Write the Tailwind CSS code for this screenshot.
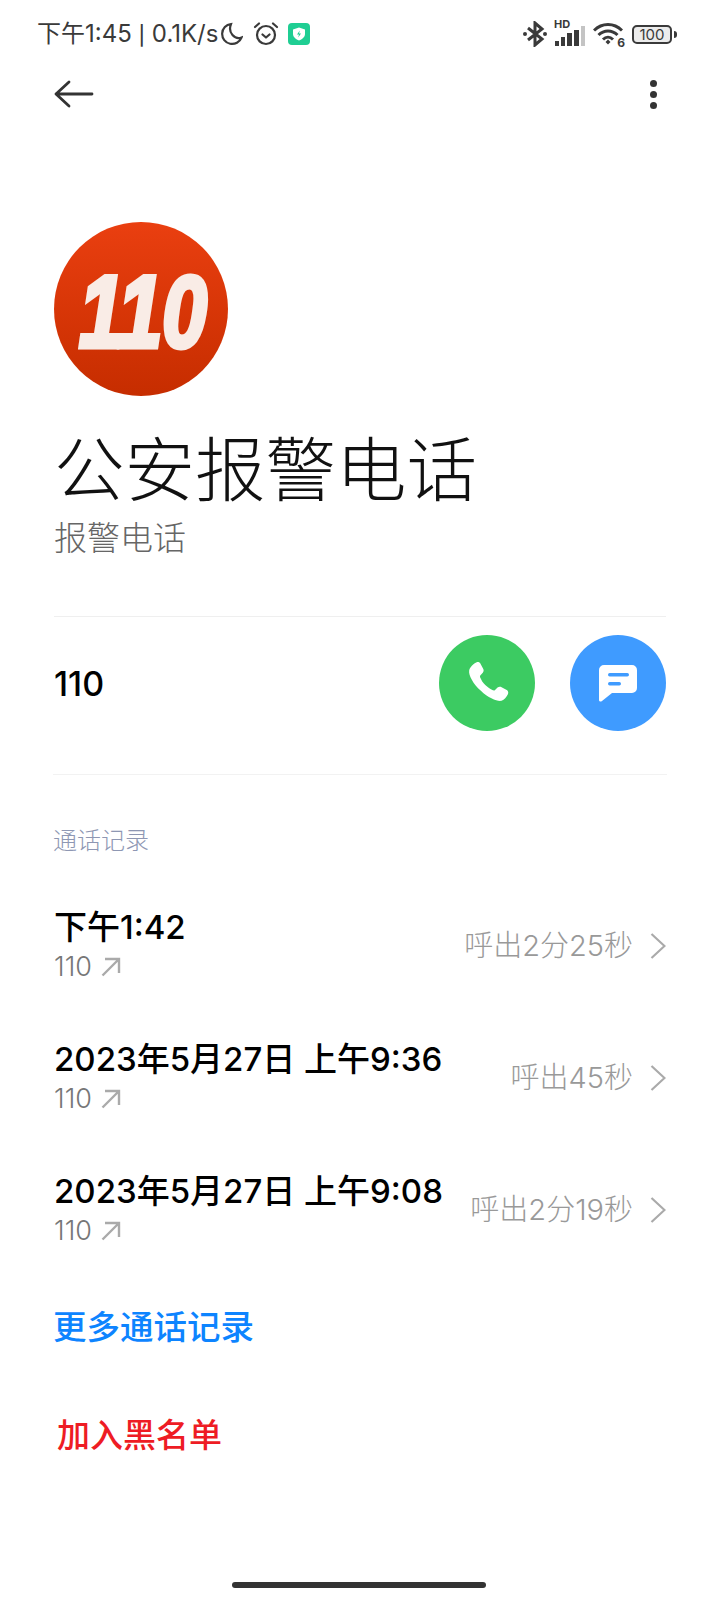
<!DOCTYPE html>
<html lang="zh">
<head>
  <meta charset="UTF-8">
  <meta name="viewport" content="width=device-width, initial-scale=1.0">
  <title>公安报警电话</title>
  <script src="https://cdn.jsdelivr.net/npm/@tailwindcss/browser@4"></script>
</head>
<body class="bg-white font-['Inter','Noto_Sans_CJK_SC',sans-serif] antialiased">
  <div class="w-[720px] h-[1600px] relative overflow-hidden">
    <!-- Status bar -->
    <div class="h-[68px] pl-[37px] pr-[43px] flex items-center justify-between text-[#3a3a3a]">
      <div class="flex items-center">
        <span class="text-[24px] leading-none">下午1:45 <span class="text-[19px] font-medium">|</span> 0.1K/s</span>
        <svg class="w-[24px] h-[24px] ml-[1px]" viewBox="0 0 24 24" fill="none" stroke="#3a3a3a" stroke-width="2.200" stroke-linecap="round"><path d="M12 2a10 10 0 1 0 10.500 13.500C16 18 8.500 11 12 2z"/></svg>
        <svg class="w-[26px] h-[26px] ml-[10px]" viewBox="0 0 26 26" fill="none" stroke="#3a3a3a" stroke-width="2.200" stroke-linecap="round" stroke-linejoin="round"><circle cx="13" cy="14" r="9"/><path d="M2 6l4-3.500M24 6l-4-3.500M9.500 13.500l3.500 3 3.500-3"/></svg>
        <div class="w-[22px] h-[22px] ml-[9px] rounded-[4px] bg-[#1fce93] flex items-center justify-center">
          <svg class="w-[14px] h-[14px]" viewBox="0 0 14 14"><path d="M7 .5l6 2v4.500c0 3-3 5.500-6 6.500-3-1-6-3.500-6-6.500V2.500z" fill="#fff"/><path d="M7.800 3.500L5 7.500h2l-.8 3 2.800-4H7z" fill="#1fce93"/></svg>
        </div>
      </div>
      <div class="flex items-center">
        <svg class="w-[24px] h-[26px]" viewBox="0 0 24 26" fill="none" stroke="#3a3a3a" stroke-width="3"><path d="M5 7l14 11-7 6V2l7 6L5 19"/><circle cx="2" cy="13" r="2" fill="#3a3a3a" stroke="none"/><circle cx="22" cy="13" r="2" fill="#3a3a3a" stroke="none"/></svg>
        <div class="relative w-[34px] h-[26px] ml-[5px]">
          <span class="absolute left-[2px] top-[-2px] font-bold text-[11px] leading-none">HD</span>
          <div class="absolute bottom-[1px] left-[3px] flex items-end gap-[2px]">
            <i class="block w-[4px] h-[5px] bg-[#3a3a3a]"></i>
            <i class="block w-[4px] h-[9px] bg-[#3a3a3a]"></i>
            <i class="block w-[5px] h-[13px] bg-[#3a3a3a]"></i>
            <i class="block w-[5px] h-[16px] bg-[#3a3a3a]"></i>
            <i class="block w-[4px] h-[20px] bg-[#c4c4c4]"></i>
          </div>
        </div>
        <div class="relative w-[30px] h-[24px] ml-[7px]">
          <svg class="w-[30px] h-[24px]" viewBox="0 0 30 24" fill="none" stroke="#3a3a3a" stroke-width="3"><path d="M1 8.500c8-8 20-8 28 0M5.500 13c5.500-5.500 13.500-5.500 19 0M10 17.500c3-3 7-3 10 0"/><path d="M12.500 20l2.500-2.500 2.500 2.500-2.500 2.500z" fill="#3a3a3a" stroke="none"/></svg>
          <span class="absolute right-[-2px] bottom-[-3px] font-bold text-[12px] leading-none">6</span>
        </div>
        <div class="w-[40px] h-[19px] ml-[9px] border-2 border-[#3a3a3a] rounded-[5px] flex items-center justify-center text-[15px] leading-none bg-[#ececec]">100</div>
        <i class="block w-[3px] h-[7px] ml-[2px] bg-[#3a3a3a] rounded-r-sm"></i>
      </div>
    </div>

    <!-- Toolbar -->
    <div class="h-[52px] pl-[54px] pr-[63px] flex items-center justify-between">
      <svg class="w-[40px] h-[28px]" viewBox="0 0 40 28" fill="none" stroke="#333" stroke-width="2.800" stroke-linecap="round" stroke-linejoin="round"><path d="M38 14H2M15 2L2 14l13 12"/></svg>
      <div class="flex flex-col gap-[4px]">
        <i class="block w-[7px] h-[7px] rounded-full bg-[#333]"></i>
        <i class="block w-[7px] h-[7px] rounded-full bg-[#333]"></i>
        <i class="block w-[7px] h-[7px] rounded-full bg-[#333]"></i>
      </div>
    </div>

    <main class="px-[54px]">
      <!-- Avatar -->
      <div class="mt-[102px] w-[174px] h-[174px] rounded-full bg-gradient-to-b from-[#ea3f10] to-[#c62d00]">
        <svg class="w-[174px] h-[174px]" viewBox="0 0 174 174">
          <text x="89" y="125" text-anchor="middle" font-family="Liberation Sans" font-weight="700" font-style="italic" font-size="102" textLength="128" lengthAdjust="spacingAndGlyphs" fill="#f9ece6" stroke="#f9ece6" stroke-width="5">110</text>
        </svg>
      </div>

      <h1 class="mt-[31px] text-[70.500px] leading-[88px] font-light text-[#111]">公安报警电话</h1>
      <p class="mt-[1px] text-[33px] leading-[44px] font-light text-[#666]">报警电话</p>

      <!-- Number row -->
      <div class="mt-[56px] border-t border-[#efefef] h-[158px] pt-[18px] pb-[43px] flex items-center justify-between">
        <span class="text-[34px] font-medium text-black">110</span>
        <div class="flex gap-[35px]">
          <div class="w-[96px] h-[96px] rounded-full bg-[#3ccb62] flex items-center justify-center">
            <svg class="w-[46px] h-[46px]" viewBox="0 0 24 24" fill="#fff"><path d="M6.400 1.300c.8-.4 1.700-.2 2.200.6l1.400 2.700c.4.700.3 1.500-.2 2.100L8.600 8c-.3.300-.3.700-.2 1 .6 1.500 1.500 2.900 2.700 4.100 1.200 1.200 2.600 2.100 4 2.700.4.100.8.100 1.100-.2l1.300-1.200c.6-.5 1.400-.6 2.100-.2l2.700 1.500c.8.500 1 1.400.6 2.200-.7 1.500-1.900 3-3.300 3.400-2 .5-6.700-1.200-10.800-5.200C4.800 12.600 2.300 7.900 2.700 5.500c.3-1.700 2.200-3.500 3.700-4.200z"/></svg>
          </div>
          <div class="w-[96px] h-[96px] rounded-full bg-[#3f9bff] flex items-center justify-center">
            <svg class="w-[38px] h-[37px]" viewBox="0 0 38 37"><path d="M5 0h28a5 5 0 0 1 5 5v18a5 5 0 0 1-5 5H13L3 36c-1.500 1-3 .5-3-1V5a5 5 0 0 1 5-5z" fill="#fff"/><rect x="9" y="8" width="21" height="3.500" rx="1.700" fill="#3f9bff"/><rect x="9" y="17" width="13" height="3.500" rx="1.700" fill="#3f9bff"/></svg>
          </div>
        </div>
      </div>

      <div class="-mx-[1px] border-t border-[#f2f2f2] pt-[50px]">
        <h2 class="text-[24px] leading-[32px] font-light text-[#8e97b3]">通话记录</h2>
      </div>

      <!-- Call log -->
      <div class="mt-[23px]">
        <div class="h-[132px] flex items-center justify-between">
          <div class="pb-[2px]">
            <p class="text-[33px] leading-[44px] font-medium text-black">下午1:42</p>
            <p class="text-[27px] leading-[36px] font-light text-[#777] flex items-center">110
              <svg class="w-[20px] h-[20px] ml-[9px]" viewBox="0 0 20 20" fill="none" stroke="#aaa" stroke-width="2.400"><path d="M1.500 18.500L18 2M4 2h14v14"/></svg>
            </p>
          </div>
          <div class="flex items-center text-[29px] font-light text-[#999]">呼出2分25秒
            <svg class="w-[16px] h-[28px] ml-[17px]" viewBox="0 0 16 28" fill="none" stroke="#aaa" stroke-width="2.200"><path d="M1.500 2l13 12-13 12"/></svg>
          </div>
        </div>
        <div class="h-[132px] flex items-center justify-between">
          <div class="pb-[2px]">
            <p class="text-[33px] leading-[44px] font-medium text-black">2023年5月27日 上午9:36</p>
            <p class="text-[27px] leading-[36px] font-light text-[#777] flex items-center">110
              <svg class="w-[20px] h-[20px] ml-[9px]" viewBox="0 0 20 20" fill="none" stroke="#aaa" stroke-width="2.400"><path d="M1.500 18.500L18 2M4 2h14v14"/></svg>
            </p>
          </div>
          <div class="flex items-center text-[29px] font-light text-[#999]">呼出45秒
            <svg class="w-[16px] h-[28px] ml-[17px]" viewBox="0 0 16 28" fill="none" stroke="#aaa" stroke-width="2.200"><path d="M1.500 2l13 12-13 12"/></svg>
          </div>
        </div>
        <div class="h-[132px] flex items-center justify-between">
          <div class="pb-[2px]">
            <p class="text-[33px] leading-[44px] font-medium text-black">2023年5月27日 上午9:08</p>
            <p class="text-[27px] leading-[36px] font-light text-[#777] flex items-center">110
              <svg class="w-[20px] h-[20px] ml-[9px]" viewBox="0 0 20 20" fill="none" stroke="#aaa" stroke-width="2.400"><path d="M1.500 18.500L18 2M4 2h14v14"/></svg>
            </p>
          </div>
          <div class="flex items-center text-[29px] font-light text-[#999]">呼出2分19秒
            <svg class="w-[16px] h-[28px] ml-[17px]" viewBox="0 0 16 28" fill="none" stroke="#aaa" stroke-width="2.200"><path d="M1.500 2l13 12-13 12"/></svg>
          </div>
        </div>
      </div>

      <p class="mt-[29px] -ml-[1px] text-[33.500px] leading-[44px] font-medium text-[#0d84ff]">更多通话记录</p>
      <p class="mt-[64px] pl-[3px] text-[33px] leading-[44px] font-medium text-[#ee1c24]">加入黑名单</p>
    </main>

    <!-- Home bar -->
    <div class="absolute bottom-[12px] left-[232px] w-[254px] h-[6px] rounded-full bg-[#333]"></div>
  </div>
</body>
</html>
